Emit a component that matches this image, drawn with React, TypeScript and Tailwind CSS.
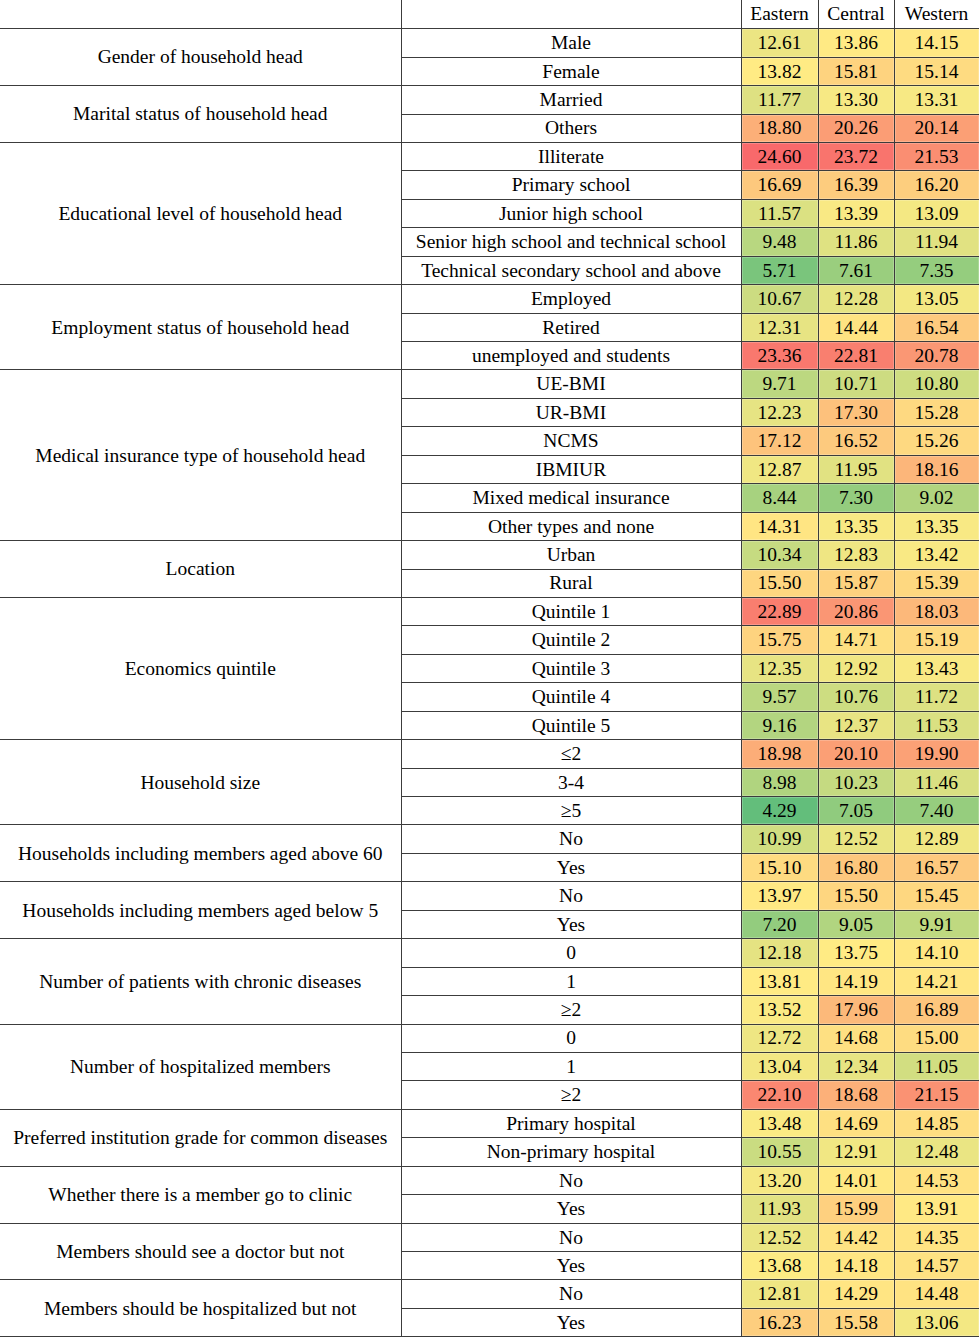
import React from 'react';

type Row = [string, number, number, number];
type Group = { name: string; rows: Row[] };

const GROUPS: Group[] = [
    { name: 'Gender of household head', rows: [['Male', 12.61, 13.86, 14.15], ['Female', 13.82, 15.81, 15.14]] },
    { name: 'Marital status of household head', rows: [['Married', 11.77, 13.30, 13.31], ['Others', 18.80, 20.26, 20.14]] },
    {
        name: 'Educational level of household head',
        rows: [
            ['Illiterate', 24.60, 23.72, 21.53],
            ['Primary school', 16.69, 16.39, 16.20],
            ['Junior high school', 11.57, 13.39, 13.09],
            ['Senior high school and technical school', 9.48, 11.86, 11.94],
            ['Technical secondary school and above', 5.71, 7.61, 7.35],
        ],
    },
    {
        name: 'Employment status of household head',
        rows: [['Employed', 10.67, 12.28, 13.05], ['Retired', 12.31, 14.44, 16.54], ['unemployed and students', 23.36, 22.81, 20.78]],
    },
    {
        name: 'Medical insurance type of household head',
        rows: [
            ['UE-BMI', 9.71, 10.71, 10.80],
            ['UR-BMI', 12.23, 17.30, 15.28],
            ['NCMS', 17.12, 16.52, 15.26],
            ['IBMIUR', 12.87, 11.95, 18.16],
            ['Mixed medical insurance', 8.44, 7.30, 9.02],
            ['Other types and none', 14.31, 13.35, 13.35],
        ],
    },
    { name: 'Location', rows: [['Urban', 10.34, 12.83, 13.42], ['Rural', 15.50, 15.87, 15.39]] },
    {
        name: 'Economics quintile',
        rows: [
            ['Quintile 1', 22.89, 20.86, 18.03],
            ['Quintile 2', 15.75, 14.71, 15.19],
            ['Quintile 3', 12.35, 12.92, 13.43],
            ['Quintile 4', 9.57, 10.76, 11.72],
            ['Quintile 5', 9.16, 12.37, 11.53],
        ],
    },
    { name: 'Household size', rows: [['≤2', 18.98, 20.10, 19.90], ['3-4', 8.98, 10.23, 11.46], ['≥5', 4.29, 7.05, 7.40]] },
    { name: 'Households including members aged above 60', rows: [['No', 10.99, 12.52, 12.89], ['Yes', 15.10, 16.80, 16.57]] },
    { name: 'Households including members aged below 5', rows: [['No', 13.97, 15.50, 15.45], ['Yes', 7.20, 9.05, 9.91]] },
    {
        name: 'Number of patients with chronic diseases',
        rows: [['0', 12.18, 13.75, 14.10], ['1', 13.81, 14.19, 14.21], ['≥2', 13.52, 17.96, 16.89]],
    },
    { name: 'Number of hospitalized members', rows: [['0', 12.72, 14.68, 15.00], ['1', 13.04, 12.34, 11.05], ['≥2', 22.10, 18.68, 21.15]] },
    { name: 'Preferred institution grade for common diseases', rows: [['Primary hospital', 13.48, 14.69, 14.85], ['Non-primary hospital', 10.55, 12.91, 12.48]] },
    { name: 'Whether there is a member go to clinic', rows: [['No', 13.20, 14.01, 14.53], ['Yes', 11.93, 15.99, 13.91]] },
    { name: 'Members should see a doctor but not', rows: [['No', 12.52, 14.42, 14.35], ['Yes', 13.68, 14.18, 14.57]] },
    { name: 'Members should be hospitalized but not', rows: [['No', 12.81, 14.29, 14.48], ['Yes', 16.23, 15.58, 13.06]] },
];

// three-colour scale over every value: green (low) -> yellow (median) -> red (high)
const ALL = GROUPS.flatMap((g) => g.rows.flatMap((r) => [r[1], r[2], r[3]])).sort((a, b) => a - b);
const MIN = ALL[0];
const MAX = ALL[ALL.length - 1];
const MID = (() => {
    const pos = (ALL.length - 1) * 0.5;
    const lo = Math.floor(pos);
    return ALL[lo] + (ALL[Math.ceil(pos)] - ALL[lo]) * (pos - lo);
})();

const GREEN = [99, 190, 123];
const YELLOW = [255, 235, 132];
const RED = [248, 105, 107];

const mix = (a: number[], b: number[], t: number) =>
    `rgb(${a.map((v, i) => Math.round(v + (b[i] - v) * t)).join(',')})`;

const heat = (v: number) =>
    v <= MID ? mix(GREEN, YELLOW, (v - MIN) / (MID - MIN)) : mix(YELLOW, RED, (v - MID) / (MAX - MID));

const line = 'border-[#3c3c3c]';

export default function App() {
    return (
        <div className="w-[979px] bg-white text-black">
            <table className="w-[979px] table-fixed border-collapse font-['Liberation_Serif','Times_New_Roman',serif] text-[19.5px] leading-none text-black">
                <colgroup>
                    <col className="w-[401px]" />
                    <col className="w-[340px]" />
                    <col className="w-[77px]" />
                    <col className="w-[76px]" />
                    <col className="w-[85px]" />
                </colgroup>
                <thead>
                    <tr className="h-[28.7px]">
                        <th className={`border-b border-r ${line} font-normal`} />
                        <th className={`border-b border-r ${line} font-normal`} />
                        <th className={`border-b border-r ${line} font-normal text-center`}>Eastern</th>
                        <th className={`border-b border-r ${line} font-normal text-center`}>Central</th>
                        <th className={`border-b border-r ${line} font-normal text-center`}>Western</th>
                    </tr>
                </thead>
                <tbody>
                    {GROUPS.map((g) =>
                        g.rows.map((r, i) => (
                            <tr key={g.name + r[0]} className="h-[28.44px]">
                                {i === 0 && (
                                    <td rowSpan={g.rows.length} className={`border-b border-r ${line} text-center align-middle`}>
                                        {g.name}
                                    </td>
                                )}
                                <td className={`border-b border-r ${line} text-center`}>{r[0]}</td>
                                {[r[1], r[2], r[3]].map((v, k) => (
                                    <td
                                        key={k}
                                        className={`border-b border-r ${line} text-center shadow-[inset_0_0_0_1px_rgba(255,255,255,0.2)]`}
                                        style={{ backgroundColor: heat(v) }}
                                    >
                                        {v.toFixed(2)}
                                    </td>
                                ))}
                            </tr>
                        ))
                    )}
                </tbody>
            </table>
        </div>
    );
}
